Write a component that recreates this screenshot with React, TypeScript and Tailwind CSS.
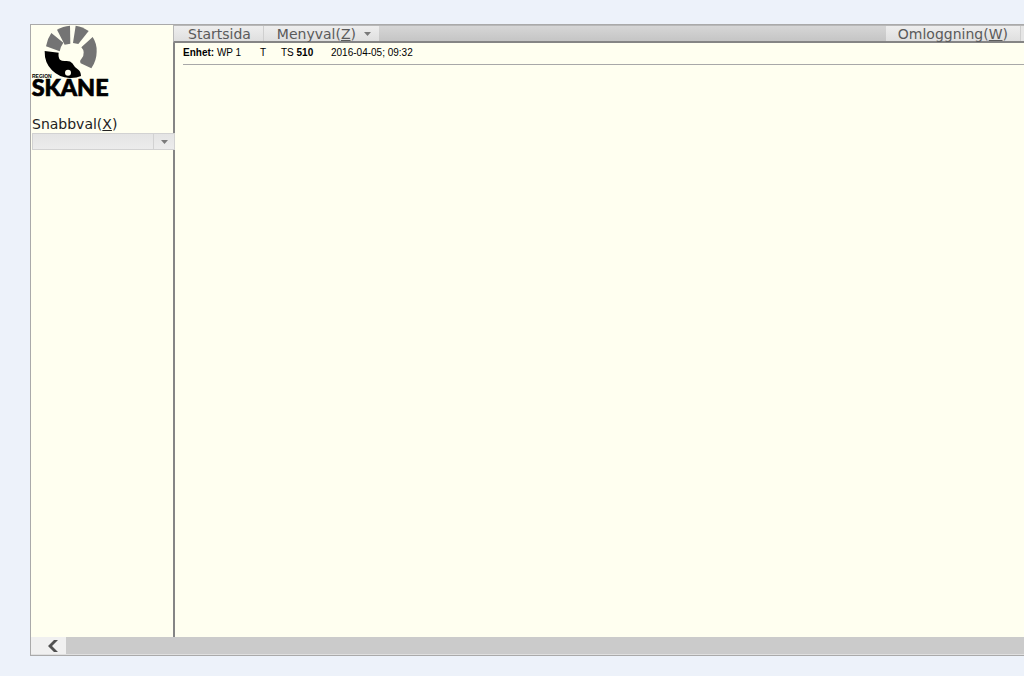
import type { ReactNode } from 'react';

const RegionLogo = () => (
  <svg className="block h-[82px] w-[84px]" viewBox="21 24 252 246" role="img" aria-label="Region Skåne">
    <g fill="#747474">
      <path d="M82 48 L118 77 Q110 88 107 103 L66 88 Q70 65 82 48Z" />
      <path d="M99 38 Q117 27 138 26 L139 80 L122 83Z" />
      <path d="M155 26 Q176 29 194 42 L163 81 L147 78Z" />
      <path d="M206 60 Q219 80 218 104 Q218 130 202 154 L170 139 Q166 131 172 126 Q180 118 179 106 Q178 97 172 91Z" />
    </g>
    <path
      fill="#000"
      d="M62 102 L104 107 Q102 121 108 128 Q114 133 125 132 Q139 131 145 139 Q151 151 163 158 Q170 162 171 177 Q157 184 136 183 Q106 182 84 160 Q61 137 62 102Z"
    />
    <circle cx="132" cy="167" r="9" fill="#fffff0" />
    <g fill="#000">
      <text x="24" y="183" fontSize="15" fontWeight="700" fontFamily="'Liberation Sans', Arial, sans-serif">
        REGION
      </text>
      <text x="23" y="238" fontSize="70" fontWeight="900" stroke="#000" strokeWidth="2" fontFamily="Lato, sans-serif">
        SKANE
      </text>
    </g>
  </svg>
);

const Caret = () => (
  <svg className="h-[4px] w-[7px]" viewBox="0 0 7 4" fill="#7a7a7a" aria-hidden="true">
    <path d="M0 0h7L3.5 4z" />
  </svg>
);

interface MenuButtonProps {
  children: ReactNode;
  className?: string;
}

const MenuButton = ({ children, className = '' }: MenuButtonProps) => (
  <button
    type="button"
    className={`flex items-center whitespace-nowrap bg-linear-to-b from-[#eeeeee] to-[#dfdfdf] pt-px text-[#5a5a5a] ${className}`}
  >
    {children}
  </button>
);

const TopMenu = () => (
  <nav className="flex h-[18px] border-t border-b-2 border-l border-t-[#b8b8b8] border-b-[#858585] border-l-[#b8b8b8] bg-linear-to-b from-[#d6d6d6] to-[#c5c5c5] font-['DejaVu_Sans',Verdana,sans-serif] text-sm leading-[15px]">
    <MenuButton className="border-r border-[#cfcfcf] pr-3 pl-[14px]">Startsida</MenuButton>
    <MenuButton className="gap-2 pr-2 pl-[13px]">
      <span>
        Menyval(<u>Z</u>)
      </span>
      <Caret />
    </MenuButton>
    <MenuButton className="ml-auto border-r border-[#cfcfcf] px-3">
      <span>
        Omloggning(<u>W</u>)
      </span>
    </MenuButton>
    <div className="w-[3px] bg-[#e6e6e6]" />
  </nav>
);

const StatusLine = () => (
  <div className="ml-2 flex h-[22px] border-b border-[#a8a8a8] pt-1 font-['Liberation_Sans',Arial,sans-serif] text-[10px] leading-3 whitespace-nowrap text-black">
    <span className="w-[77px]">
      <b>Enhet:</b> WP 1
    </span>
    <span className="w-[21px]">T</span>
    <span className="w-[50px]">
      TS <b>510</b>
    </span>
    <span>2016-04-05; 09:32</span>
  </div>
);

const Sidebar = () => (
  <aside className="w-[142px] shrink-0 font-['DejaVu_Sans',Verdana,sans-serif]">
    <RegionLogo />
    <label htmlFor="snabbval" className="mt-2 block pl-px text-sm leading-[18px] text-[#222222]">
      Snabbval(<u>X</u>)
    </label>
    <div className="relative z-10 -mr-[2px] ml-px h-[17px]">
      <select
        id="snabbval"
        className="block size-full appearance-none rounded-none border border-[#d2d2d2] bg-linear-to-b from-[#e4e4e4] to-[#ececec]"
      />
      <span className="pointer-events-none absolute inset-y-0 right-0 flex w-[22px] items-center justify-center border-l border-[#d2d2d2]">
        <Caret />
      </span>
    </div>
  </aside>
);

const HorizontalScrollbar = () => (
  <div className="flex h-[18px] shrink-0 border-b border-[#e0e0e0] bg-[#cbcbcb]">
    <button
      type="button"
      aria-label="Scrolla vänster"
      className="flex w-[35px] items-center justify-end bg-[#f0f0f0] pr-2"
    >
      <svg className="h-3 w-[10px]" viewBox="0 0 10 12" fill="#505050" aria-hidden="true">
        <path d="M6 0h4L4 6l6 6H6L0 6z" />
      </svg>
    </button>
  </div>
);

export default function App() {
  return (
    <div className="flex h-screen flex-col overflow-hidden bg-[#edf2fa] pt-6 pb-5 pl-[30px]">
      <div className="flex min-h-0 flex-1 flex-col border-y border-l border-[#aaaaaa] bg-[#fffff0]">
        <div className="flex min-h-0 flex-1">
          <Sidebar />
          <main className="flex min-w-0 flex-1 flex-col">
            <TopMenu />
            <div className="flex-1 border-l-2 border-[#858585]">
              <StatusLine />
            </div>
          </main>
        </div>
        <HorizontalScrollbar />
      </div>
    </div>
  );
}
